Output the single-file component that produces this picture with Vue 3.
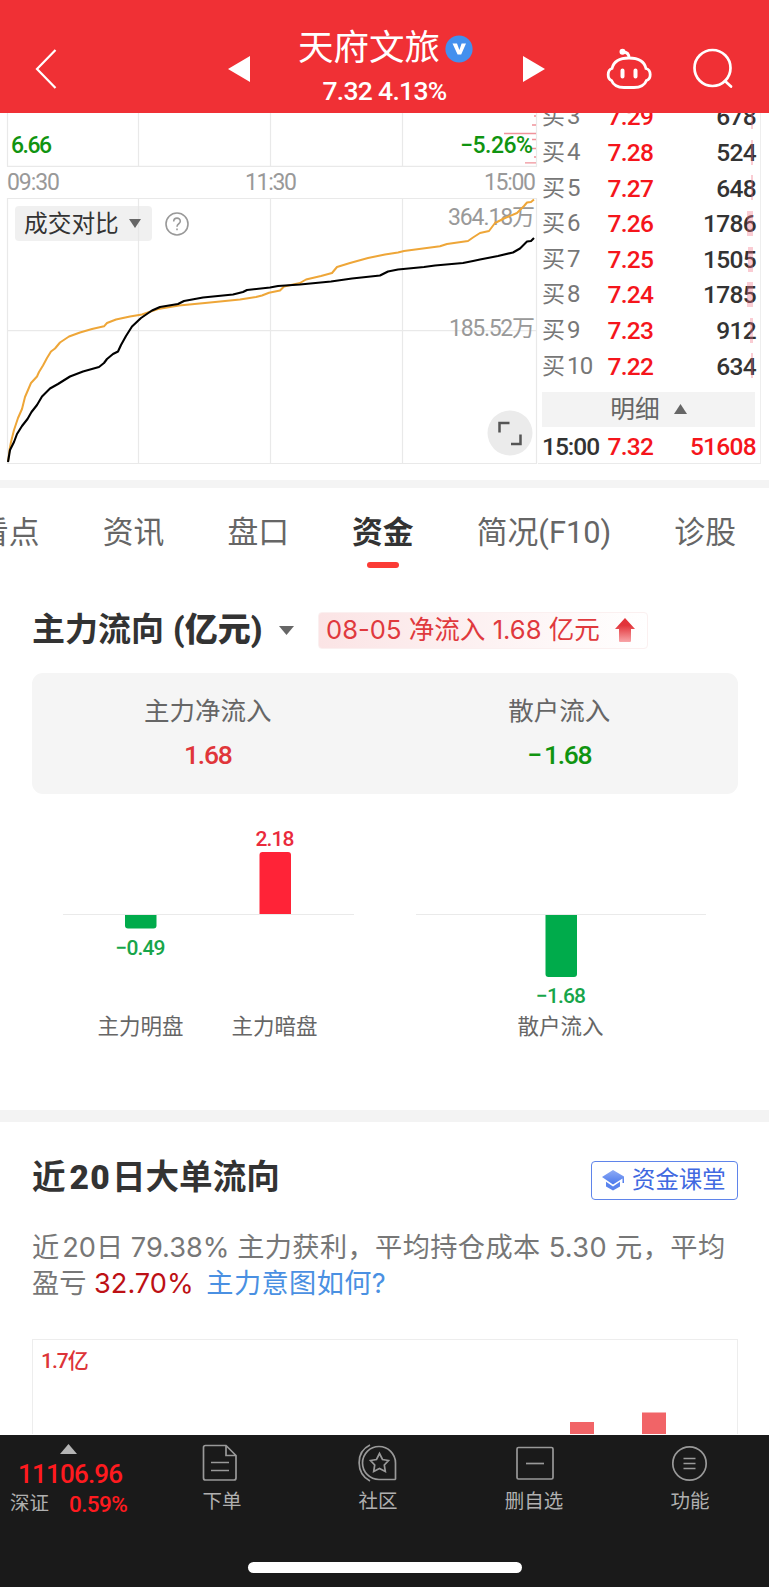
<script setup>
import { computed, ref } from "vue";

const stock = { name: "天府文旅", price: "7.32", change: "4.13%" };

// carnet d'ordres : niveau, prix, quantité, largeur de la barre rose
const bids = [
  { level: 3, price: "7.29", volume: 678, bar: 2 },
  { level: 4, price: "7.28", volume: 524, bar: 2 },
  { level: 5, price: "7.27", volume: 648, bar: 2 },
  { level: 6, price: "7.26", volume: 1786, bar: 6 },
  { level: 7, price: "7.25", volume: 1505, bar: 5 },
  { level: 8, price: "7.24", volume: 1785, bar: 6 },
  { level: 9, price: "7.23", volume: 912, bar: 3 },
  { level: 10, price: "7.22", volume: 634, bar: 2 },
];

const today = [
  [8, 462], [10, 450], [14, 442], [17, 434], [22, 426], [27.5, 419], [31.5, 412],
  [37, 405], [42, 396.5], [50, 388.5], [58, 384], [70, 376.5], [83, 371.5],
  [99, 367], [104, 363], [107, 359], [113, 354], [118, 351.5], [121, 345],
  [126, 336], [132, 326.5], [141, 318], [152, 310.5], [160, 307], [178, 304],
  [184, 301], [203, 297.5], [233, 294.5], [243, 292], [247, 290], [270, 287.5],
  [278, 286], [300, 284.5], [331, 281.5], [352, 278.5], [380, 275.5],
  [388, 271.5], [398, 269.5], [424, 267], [435, 265.5], [463, 263], [473, 261],
  [480, 259.5], [498, 256], [513, 252.5], [520, 248.5], [527, 241.5],
  [531, 241], [534, 238],
];

const yesterday = [
  [8, 462], [9.5, 450], [11, 442], [14, 430], [18, 418], [22, 409], [25, 397],
  [31, 383], [37, 376.5], [39, 372], [43, 365.5], [47, 358], [51, 351.5],
  [55, 348.5], [60, 342.5], [69, 336.5], [80, 332.5], [92, 329], [104, 326.3],
  [107, 323], [116, 319.5], [130, 316.5], [142, 314.5], [158, 309],
  [179, 305.5], [205, 303], [220, 301.5], [240, 299.5], [256, 297],
  [262, 295.5], [269, 292.8], [280, 290.5], [284, 286.5], [300, 283],
  [306, 279.5], [321, 276], [332, 273], [337, 267], [350, 263], [368, 258],
  [385, 254.5], [398, 252.5], [404, 251], [440, 246.3], [447, 244],
  [468, 241], [473, 237.5], [480, 233], [489, 231], [495, 223], [505, 218],
  [517, 213], [524, 206], [527, 202.5], [531, 202], [534, 199.5],
];

function toPoints(list) {
  return list.map((point) => point.join(",")).join(" ");
}

const todayPoints = computed(() => toPoints(today));
const yesterdayPoints = computed(() => toPoints(yesterday));

const tabs = ["看点", "资讯", "盘口", "资金", "简况(F10)", "诊股"];
const activeTab = ref("资金");
</script>

<template>
  <div class="screen">
    <header class="header">
      <svg class="back" width="24" height="42" viewBox="0 0 24 42">
        <path d="M21.5 2 L3 21 L21.5 40" fill="none" stroke="#fff" stroke-width="2.2" />
      </svg>
      <svg class="prev" width="22" height="26" viewBox="0 0 22 26">
        <path d="M22 0 V26 L0 13 Z" fill="#fff" />
      </svg>
      <div class="stock">
        <div class="stock-name">
          <span>{{ stock.name }}</span>
          <svg width="28" height="28" viewBox="0 0 28 28">
            <circle cx="14" cy="14" r="13.6" fill="#4390ee" />
            <path d="M7.5 8.5 H12 L14.4 15 L16.6 8.5 H21 L16.2 19.5 H12.6 Z" fill="#fff" />
          </svg>
        </div>
        <div class="stock-price">{{ stock.price }} {{ stock.change }}</div>
      </div>
      <svg class="next" width="22" height="26" viewBox="0 0 22 26">
        <path d="M0 0 V26 L22 13 Z" fill="#fff" />
      </svg>
      <svg class="robot" width="46" height="42" viewBox="0 0 46 42" fill="none" stroke="#fff" stroke-width="2.8">
        <path d="M23 10 C33 10 38.5 14 40 20.5 C45.5 22 45.5 31 40.5 32.5 C38.5 37.5 34 39.5 28 39.5 H18 C12 39.5 7.5 37.5 5.5 32.5 C1 31 1 22 6 20.5 C7.5 14 13 10 23 10 Z" />
        <path d="M23 10 C23 6 21 4 17 4" />
        <circle cx="16.5" cy="3.8" r="1.6" fill="#fff" />
        <path d="M16.5 22.5 V28.5 M29.5 22.5 V28.5" stroke-width="4" stroke-linecap="round" />
      </svg>
      <svg class="search" width="42" height="42" viewBox="0 0 42 42" fill="none" stroke="#fff" stroke-width="2.7">
        <circle cx="20.5" cy="20" r="18" />
        <path d="M33 33 L39 38.5" stroke-linecap="round" />
      </svg>
    </header>

    <section class="quote">
      <div class="chart">
        <svg width="538" height="367" viewBox="0 113 538 367">
          <g fill="none" stroke="#e9e9e9" stroke-width="1.2">
            <path d="M7.5 113 V166.3 H536.5 V113 M138.5 113 V166 M270.5 113 V166 M402.5 113 V166" />
            <path d="M7.5 463.5 V198.5 H536.5 V463.5 Z M138.5 198 V463 M270.5 198 V463 M402.5 198 V463 M7.5 330.7 H536.5" />
          </g>
          <path d="M504 133.5 H536 M525 162.8 H536 M534 116 H536 M532 125 H536 M532 139.5 H536 M531 148.5 H536 M534 157 H536" stroke="#f0929a" stroke-width="1.3" />
          <g class="axis">
            <text x="11" y="152.5" class="down" textLength="41">6.66</text>
            <text x="460" y="152.5" class="down" textLength="73">−5.26%</text>
            <text x="7" y="189.5" textLength="53">09:30</text>
            <text x="245" y="189.5" textLength="52">11:30</text>
            <text x="484" y="189.5" textLength="52">15:00</text>
            <text x="448" y="224.5" textLength="87">364.18万</text>
            <text x="449" y="335.5" textLength="86">185.52万</text>
          </g>
          <polyline :points="yesterdayPoints" fill="none" stroke="#eea638" stroke-width="2" stroke-linejoin="round" />
          <polyline :points="todayPoints" fill="none" stroke="#000" stroke-width="2.1" stroke-linejoin="round" />
        </svg>
        <div class="tools">
          <button class="picker">
            <span>成交对比</span>
            <svg width="12" height="9" viewBox="0 0 12 9"><path d="M0 0 H12 L6 9 Z" fill="#666" /></svg>
          </button>
          <svg width="24" height="24" viewBox="0 0 24 24" fill="none" stroke="#999" stroke-width="1.6">
            <circle cx="12" cy="12" r="11" />
            <path d="M8.7 9.5 C8.7 5 15.3 5 15.3 9.3 C15.3 12 12 11.5 12 14.7 M12 16.5 V18.3" />
          </svg>
        </div>
        <svg class="expand" width="46" height="46" viewBox="0 0 46 46">
          <circle cx="23" cy="23" r="22.5" fill="#ebebeb" />
          <path d="M12.5 22.5 V13 H22.5 M33.5 24.5 V34 H24" fill="none" stroke="#555" stroke-width="2.5" />
        </svg>
      </div>

      <div class="book">
        <div class="bid" v-for="bid in bids" :key="bid.level">
          <span class="level">买<i>{{ bid.level }}</i></span>
          <span class="price">{{ bid.price }}</span>
          <span class="volume">{{ bid.volume }}</span>
          <span class="bid-bar" :style="{ width: bid.bar + 'px' }"></span>
        </div>
        <div class="detail">
          <span>明细</span>
          <svg width="13" height="10" viewBox="0 0 13 10"><path d="M0 10 H13 L6.5 0 Z" fill="#666" /></svg>
        </div>
        <div class="bid">
          <span class="level time">15:00</span>
          <span class="price">7.32</span>
          <span class="volume red">51608</span>
        </div>
      </div>
    </section>

    <nav class="tabs">
      <a v-for="tab in tabs" :key="tab" :class="{ active: tab === activeTab }" @click="activeTab = tab">{{ tab }}</a>
    </nav>

    <section class="flow">
      <div class="flow-head">
        <h2>主力流向<b>(亿元)</b></h2>
        <svg class="caret" width="15" height="9" viewBox="0 0 15 9"><path d="M0 0 H15 L7.5 9 Z" fill="#666" /></svg>
        <div class="tag">
          <span>08-05 净流入 1.68 亿元</span>
          <svg width="20" height="24" viewBox="0 0 20 24">
            <defs>
              <linearGradient id="rise" x1="0" y1="0" x2="0" y2="1">
                <stop offset="0.3" stop-color="#e2343a" />
                <stop offset="1" stop-color="#f8a5a8" />
              </linearGradient>
            </defs>
            <path d="M10 0 L20 11 H16 V23 Q16 24 15 24 H5 Q4 24 4 23 V11 H0 Z" fill="url(#rise)" />
          </svg>
        </div>
      </div>

      <div class="summary">
        <div>
          <span>主力净流入</span>
          <strong class="in">1.68</strong>
        </div>
        <div>
          <span>散户流入</span>
          <strong class="out"><i>−</i>1.68</strong>
        </div>
      </div>

      <svg class="bars" width="769" height="240" viewBox="0 810 769 240">
        <path d="M63 914.5 H354 M416 914.5 H706" stroke="#eaeaea" stroke-width="1.2" />
        <path d="M125 915 H156.5 V925.5 Q156.5 928.5 153.5 928.5 H128 Q125 928.5 125 925.5 Z" fill="#00ab4b" />
        <path d="M259.5 914 V855 Q259.5 852 262.5 852 H288 Q291 852 291 855 V914 Z" fill="#ff2337" />
        <path d="M545.5 915 H577 V974 Q577 977 574 977 H548.5 Q545.5 977 545.5 974 Z" fill="#00ab4b" />
        <g class="bar-value">
          <text x="140.5" y="954.5" fill="#17a54a" textLength="50">−0.49</text>
          <text x="275" y="846" fill="#ea2a3c" textLength="39">2.18</text>
          <text x="561" y="1003" fill="#17a54a" textLength="50">−1.68</text>
        </g>
        <g class="bar-label">
          <text x="140.5" y="1033.5">主力明盘</text>
          <text x="274.5" y="1033.5">主力暗盘</text>
          <text x="560.5" y="1033.5">散户流入</text>
        </g>
      </svg>
    </section>

    <section class="orders">
      <div class="orders-head">
        <h2>近<b class="num">20</b>日大单流向</h2>
        <button class="course">
          <svg width="23" height="21" viewBox="0 0 23 21">
            <defs>
              <linearGradient id="cap" x1="0" y1="0" x2="0" y2="1">
                <stop offset="0" stop-color="#8fabf5" />
                <stop offset="1" stop-color="#4a78ec" />
              </linearGradient>
            </defs>
            <path d="M11 0 L22 6.5 V13 H20.5 V8.5 L11 14.5 L0 7 Z" fill="url(#cap)" />
            <path d="M4 11.8 L11 16.5 L18 11.8 V16.5 L11 20.5 L4 16.5 Z" fill="#5a84ee" />
          </svg>
          <span>资金课堂</span>
        </button>
      </div>
      <p>
        近<i class="gap">20</i>日 79.38% <span>主力获利，平均持仓成本 5.30 元，平均</span><br />
        盈亏 <em>32.70%</em> <a>主力意图如何?</a>
      </p>
      <div class="big-chart">
        <span>1.7亿</span>
        <svg width="704" height="94" viewBox="33 1341 704 94">
          <path d="M570 1423 H594 V1435 H570 Z M642 1413.5 H666 V1435 H642 Z" fill="#f16467" />
        </svg>
      </div>
    </section>

    <footer class="footer">
      <div class="menu">
        <div class="index">
          <svg width="17" height="10" viewBox="0 0 17 10"><path d="M0 10 H17 L8.5 0 Z" fill="#b5b5b5" /></svg>
          <strong>11106.96</strong>
          <div><span>深证</span><b>0.59%</b></div>
        </div>
        <div class="item">
          <svg width="40" height="38" viewBox="0 0 40 38">
            <path d="M3.5 1.5 H24 L34 11.5 V34 Q34 36 32 36 H3.5 Q1.5 36 1.5 34 V3.5 Q1.5 1.5 3.5 1.5 Z M24 1.5 V11.5 H34 M9 18.5 H27 M9 26.5 H27" />
          </svg>
          下单
        </div>
        <div class="item">
          <svg width="40" height="38" viewBox="0 0 40 38">
            <path d="M37 35.5 H21 A16.5 16.5 0 1 1 37.5 19 V35 Z" />
            <path d="M12 1 C-2.5 8 -2.5 29 12 37" />
            <path d="M21.5 9.5 L24.5 15.5 L30.5 16.5 L26.3 21 L27.3 27.5 L21.5 24.5 L15.7 27.5 L16.7 21 L12.5 16.5 L18.5 15.5 Z" />
          </svg>
          社区
        </div>
        <div class="item">
          <svg width="40" height="38" viewBox="0 0 40 38">
            <rect x="3" y="3.5" width="36" height="31.5" rx="1.5" />
            <path d="M12 19.5 H30" />
          </svg>
          删自选
        </div>
        <div class="item">
          <svg width="40" height="38" viewBox="0 0 40 38">
            <circle cx="19.5" cy="19.5" r="16.7" />
            <path d="M13.5 14.5 H25.5 M13.5 19.5 H25.5 M13.5 24.5 H25.5" />
          </svg>
          功能
        </div>
      </div>
      <div class="home"></div>
    </footer>
  </div>
</template>

<style>
body {
  margin: 0;
  background-color: white;
}
</style>

<style scoped>
* {
  box-sizing: border-box;
}

.screen {
  width: 769px;
  height: 1587px;
  overflow: hidden;
  display: flex;
  flex-direction: column;
  background-color: white;
  font-family: Roboto, "Noto Sans CJK SC", sans-serif;
  color: #333;
}

svg {
  display: block;
  flex: none;
}

i,
em {
  font-style: normal;
}

h2,
p {
  margin: 0;
}

button {
  font-family: inherit;
  padding: 0;
}

.header {
  height: 113px;
  flex: none;
  display: flex;
  align-items: flex-start;
  background-color: #f03035;
  color: white;
  padding: 0 34px;
}

.back {
  margin-top: 48px;
}

.prev,
.next {
  margin-top: 56px;
}

.prev {
  margin-left: 170px;
}

.stock {
  width: 273px;
  padding-top: 29px;
}

.stock-name {
  display: flex;
  align-items: center;
  height: 39px;
  padding-left: 48px;
  font-size: 35.5px;
  font-weight: 400;
  line-height: 39px;
}

.stock-name svg {
  margin-left: 5px;
}

.stock-price {
  margin-top: 8px;
  padding-right: 4px;
  text-align: center;
  font-size: 26.5px;
  font-weight: 500;
  line-height: 30px;
  letter-spacing: -0.7px;
}

.robot {
  margin: 48px 0 0 61px;
}

.search {
  margin: 48px 0 0 40px;
}

.quote {
  height: 375px;
  flex: none;
  display: flex;
  overflow: hidden;
  border-bottom: 8px solid #f4f4f4;
}

.chart {
  width: 538px;
  position: relative;
}

.axis text {
  font-size: 23px;
  fill: #999;
}

.axis .down {
  fill: #109410;
  font-weight: 500;
}

.tools {
  position: absolute;
  left: 15px;
  top: 93px;
  display: flex;
  align-items: center;
  gap: 13px;
}

.picker {
  width: 137px;
  height: 35px;
  border: none;
  border-radius: 4px;
  background-color: rgba(230, 230, 230, 0.6);
  display: flex;
  align-items: center;
  gap: 10.5px;
  padding-left: 9px;
  font-size: 23.7px;
  color: #333;
}

.picker span {
  padding-top: 2px;
  line-height: 35px;
}

.expand {
  position: absolute;
  left: 487px;
  top: 297px;
}

.book {
  width: 223px;
  height: 351px;
  padding: 0 5px 0 4px;
  border-right: 1px solid #eee;
  border-bottom: 1px solid #eaeaea;
}

.bid {
  position: relative;
  display: flex;
  align-items: center;
  height: 35.64px;
  font-size: 24.5px;
  line-height: 35px;
}

.bid:first-child {
  margin-top: -14px;
}

.level {
  width: 65.5px;
  font-size: 23px;
  color: #777;
}

.level i {
  margin-left: 2px;
  font-size: 24px;
  letter-spacing: -0.7px;
}

.level.time {
  font-size: 24.5px;
  font-weight: 500;
  letter-spacing: -1px;
  color: #333;
}

.price {
  color: #f5151b;
  font-weight: 500;
  letter-spacing: -0.7px;
}

.volume {
  margin-left: auto;
  margin-right: -1px;
  font-weight: 500;
  letter-spacing: -0.7px;
}

.volume.red {
  color: #f5151b;
}

.bid-bar {
  position: absolute;
  right: 2px;
  top: 5px;
  height: 25px;
  background-color: rgba(240, 110, 130, 0.35);
}

.detail {
  width: 213px;
  height: 35px;
  margin: 8px 0 2px;
  display: flex;
  align-items: center;
  justify-content: center;
  gap: 14px;
  background-color: #f3f3f3;
  font-size: 24.7px;
  color: #666;
}

.detail span {
  line-height: 35px;
  margin-top: -1px;
}

.detail svg {
  margin-top: -2px;
}

.tabs {
  height: 102px;
  flex: none;
  display: flex;
  justify-content: space-between;
  align-items: flex-start;
  padding: 23px 33px 0 0;
  margin-left: -22px;
  font-size: 30.8px;
  line-height: 44px;
  color: #666;
}

.tabs .active {
  color: #333;
  font-weight: bold;
}

.tabs .active::after {
  content: "";
  display: block;
  width: 32px;
  height: 6px;
  margin: 7px auto 0;
  border-radius: 3px;
  background-color: #fb3b35;
}

.flow {
  height: 532px;
  flex: none;
  border-bottom: 12px solid #f3f3f3;
}

.flow-head {
  display: flex;
  align-items: center;
  height: 80px;
  padding-left: 32px;
}

h2 {
  font-size: 33px;
  line-height: 44px;
  font-weight: bold;
  color: #333;
}

.flow-head h2 {
  width: 231px;
  white-space: nowrap;
}

.flow-head b {
  margin-left: 9px;
}

.caret {
  margin-left: 16px;
}

.tag {
  width: 330px;
  height: 37px;
  margin-left: 24px;
  padding: 0 12px 0 7px;
  display: flex;
  align-items: center;
  justify-content: space-between;
  border: 1px solid #fbf0f0;
  border-radius: 4px;
  background: linear-gradient(90deg, #fbe4e5, #fff);
  font-family: Inter, "Noto Sans CJK SC", sans-serif;
  font-size: 25.6px;
  line-height: 36px;
  color: #e0393d;
}

.summary {
  height: 121px;
  margin: 2.5px 31px 0 32px;
  padding: 19px 3px 19px 0;
  display: grid;
  grid-template-columns: 1fr 1fr;
  border-radius: 11px;
  background-color: #f5f5f5;
}

.summary div {
  display: flex;
  flex-direction: column;
  align-items: center;
}

.summary span {
  font-size: 25.5px;
  line-height: 38px;
  color: #666;
}

.summary strong {
  margin-top: 9px;
  font-size: 26.5px;
  line-height: 32px;
  font-weight: 500;
  letter-spacing: -1.3px;
}

.in {
  color: #e0363a;
}

.out {
  color: #109410;
}

.out i {
  margin-right: 3px;
}

.bars {
  margin-top: 16.5px;
}

.bar-value text {
  font-size: 21px;
  font-weight: 500;
  text-anchor: middle;
}

.bar-label text {
  font-size: 21.5px;
  fill: #666;
  text-anchor: middle;
}

.orders {
  height: 313px;
  flex: none;
  padding: 39px 31px 0 32px;
}

.orders-head {
  display: flex;
  justify-content: space-between;
  height: 39px;
}

.orders-head h2 {
  font-size: 33.6px;
  line-height: 34px;
}

.orders-head .num {
  margin: 0 1px 0 4px;
  letter-spacing: 1.2px;
}

.course {
  width: 147px;
  height: 39px;
  display: flex;
  align-items: center;
  gap: 7px;
  padding-left: 10px;
  border: 1.5px solid #5f84ea;
  border-radius: 4px;
  background-color: white;
  font-size: 23.4px;
  color: #4169e1;
}

.course span {
  line-height: 30px;
  margin-top: -1px;
}

.orders p {
  margin-top: 30px;
  font-family: Inter, "Noto Sans CJK SC", sans-serif;
  font-size: 27.2px;
  line-height: 36px;
  color: #777;
  white-space: nowrap;
}

.orders p span,
.orders p a {
  letter-spacing: 0.4px;
}

.gap {
  margin-left: 3px;
}

em {
  color: #bd1015;
}

p a {
  color: #4a90e2;
  margin-left: 5px;
}

.big-chart {
  height: 95px;
  margin-top: 37px;
  border: 1px solid #ededed;
  border-bottom: none;
  position: relative;
}

.big-chart span {
  position: absolute;
  left: 8px;
  top: 8px;
  font-size: 21px;
  line-height: 26px;
  letter-spacing: -1px;
  font-weight: 500;
  color: #dd3438;
}

.footer {
  height: 153px;
  flex: none;
  background-color: #1a1a1a;
}

.menu {
  height: 127px;
  display: flex;
}

.index {
  width: 144px;
  padding: 9px 0 0 10px;
  color: #ff1a1f;
}

.index svg {
  margin-left: 50px;
}

.index strong {
  display: block;
  padding-left: 8px;
  margin-top: 4px;
  font-size: 26px;
  line-height: 32px;
  font-weight: 500;
  letter-spacing: -0.8px;
}

.index div {
  display: flex;
  align-items: center;
  line-height: 28px;
}

.index span {
  width: 59px;
  font-size: 19.5px;
  color: #b0b0b0;
}

.index b {
  font-size: 22.5px;
  font-weight: 500;
  letter-spacing: -0.6px;
}

.item {
  width: 156px;
  padding-top: 9px;
  display: flex;
  flex-direction: column;
  align-items: center;
  font-size: 19.5px;
  line-height: 40px;
  color: #b0b0b0;
}

.item svg {
  fill: none;
  stroke: #999;
  stroke-width: 1.7;
}

.home {
  width: 274px;
  height: 11px;
  margin: 0 auto;
  border-radius: 6px;
  background-color: white;
}
</style>
